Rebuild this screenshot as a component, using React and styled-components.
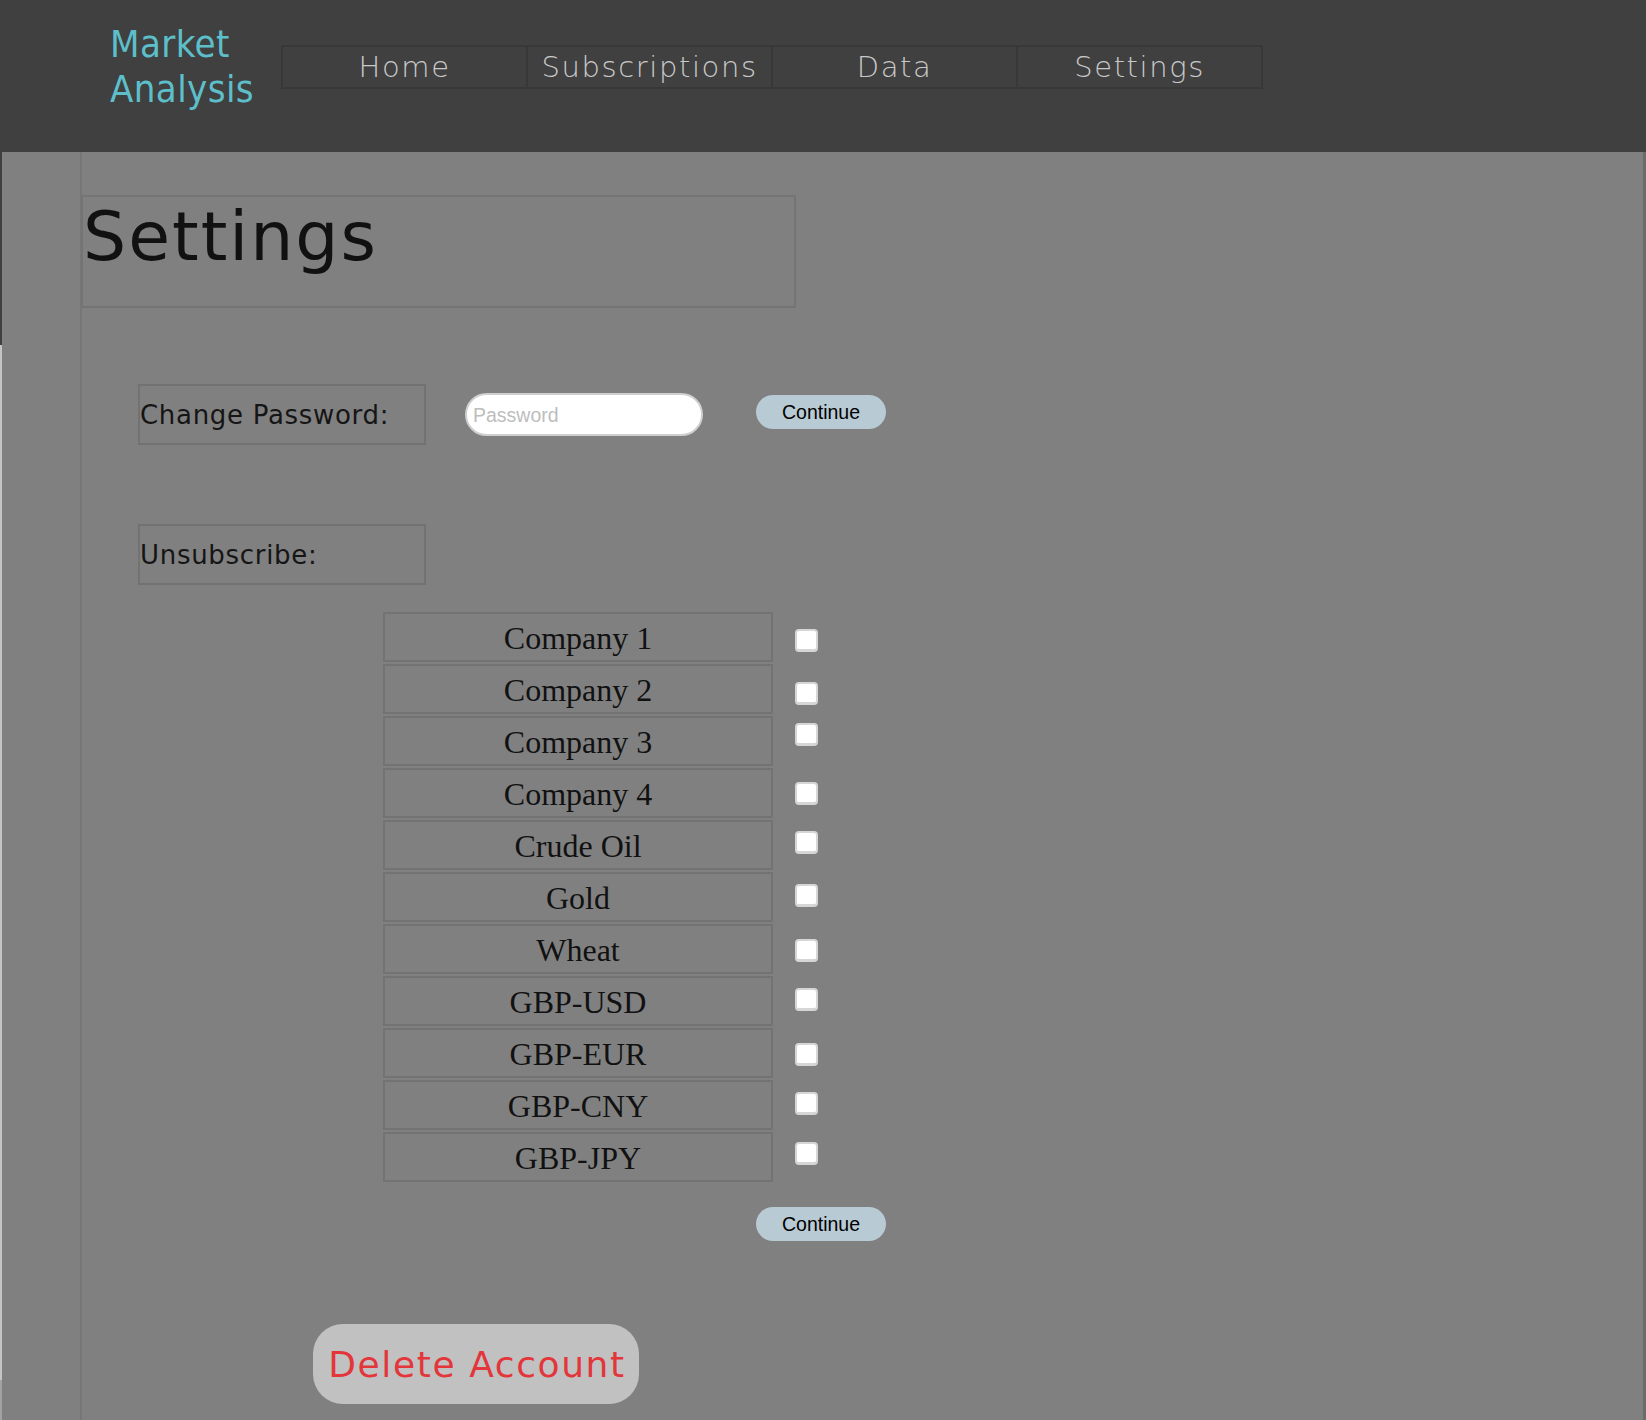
import React from "react";
import styled, { createGlobalStyle } from "styled-components";

const GlobalStyle = createGlobalStyle`
  html, body {
    margin: 0;
    padding: 0;
    background: #c4c4c4;
  }
  #root {
    min-height: 100vh;
  }
`;

const Page = styled.div`
  display: flex;
  flex-direction: column;
  min-height: 100vh;
`;

const Header = styled.header`
  display: flex;
  align-items: flex-start;
  height: 152px;
  padding-left: 110px;
  background: #404040;
  box-sizing: border-box;
`;

const Logo = styled.div`
  margin-top: 22px;
  font-family: "DejaVu Sans Condensed", "DejaVu Sans", sans-serif;
  font-stretch: condensed;
  font-size: 38px;
  line-height: 45px;
  letter-spacing: 0.4px;
  color: #5dbfca;
`;

const Nav = styled.nav`
  display: flex;
  margin-top: 45px;
  margin-left: 27px;
  border: 2px solid #383838;
`;

const NavItem = styled.a`
  display: flex;
  align-items: center;
  justify-content: center;
  width: 243px;
  height: 40px;
  border-left: ${(p) => (p.$first ? "none" : "2px solid #383838")};
  font-family: "DejaVu Sans", sans-serif;
  font-weight: 300;
  font-size: 29px;
  letter-spacing: 1.6px;
  color: #c9c9c9;
  text-decoration: none;
  cursor: pointer;
`;

const Main = styled.main`
  flex: 1;
  display: flex;
  padding-left: 2px;
  background:
    linear-gradient(to bottom, #404040 193px, #c4c4c4 193px, #c4c4c4 1228px, #a2a2a2 1228px) left top / 2px 100% no-repeat,
    #808080;
  border-right: 3px solid #6c6c6c;
`;

const Content = styled.section`
  display: flex;
  flex-direction: column;
  align-items: flex-start;
  margin-left: 78px;
  padding-bottom: 15px;
  border-left: 2px solid #767676;
`;

const TitleBox = styled.div`
  margin-top: 43px;
  margin-left: -1px;
  width: 715px;
  height: 113px;
  box-sizing: border-box;
  border: 2px solid #747474;
`;

const Title = styled.h1`
  margin: 0;
  font-family: "DejaVu Sans", sans-serif;
  font-weight: 400;
  font-size: 68px;
  line-height: normal;
  letter-spacing: 2px;
  color: #111;
`;

const FormRow = styled.div`
  display: flex;
  align-items: center;
  margin-top: 76px;
  margin-left: 56px;
`;

const Label = styled.div`
  display: flex;
  align-items: center;
  width: 288px;
  height: 61px;
  box-sizing: border-box;
  margin-top: ${(p) => p.$top || 0}px;
  margin-left: ${(p) => p.$left || 0}px;
  border: 2px solid #727272;
  font-family: "DejaVu Sans", sans-serif;
  font-size: 26px;
  letter-spacing: 0.7px;
  color: #151515;
`;

const PasswordInput = styled.input`
  width: 238px;
  height: 43px;
  box-sizing: border-box;
  margin-left: 39px;
  padding: 2px 6px 0;
  border: 2px solid #cfcfcf;
  border-radius: 22px;
  background: #fff;
  outline: none;
  font-family: "Liberation Sans", Arial, sans-serif;
  font-size: 19.5px;

  &::placeholder {
    color: #bdbdbd;
  }
`;

const PillButton = styled.button`
  width: 130px;
  height: 34px;
  margin-top: ${(p) => p.$top || 0}px;
  margin-left: ${(p) => p.$left || 0}px;
  margin-bottom: ${(p) => p.$lift || 0}px;
  padding: 0;
  border: none;
  border-radius: 17px;
  background: #b8cad3;
  font-family: "Liberation Sans", Arial, sans-serif;
  font-size: 19.5px;
  color: #000;
  cursor: pointer;
`;

const SubList = styled.div`
  display: flex;
  margin-top: 27px;
  margin-left: 301px;
`;

const Names = styled.div`
  display: flex;
  flex-direction: column;
  gap: 2px;
`;

const NameRow = styled.div`
  display: flex;
  align-items: center;
  justify-content: center;
  width: 390px;
  height: 50px;
  box-sizing: border-box;
  padding-top: 3px;
  border: 2px solid #737373;
  font-family: "Liberation Serif", "Times New Roman", serif;
  font-size: 32px;
  color: #111;
`;

const Checks = styled.div`
  display: flex;
  flex-direction: column;
  gap: 2px;
  margin-left: 22px;
`;

const CheckSlot = styled.div`
  height: 50px;
  box-sizing: border-box;
  padding-top: ${(p) => 14 + p.$shift}px;
`;

const Check = styled.input`
  appearance: none;
  display: block;
  margin: 0;
  width: 23px;
  height: 23px;
  box-sizing: border-box;
  border: 2px solid #d6d6d6;
  border-bottom-width: 3px;
  border-radius: 4px;
  background: #fff;
  cursor: pointer;

  &:checked {
    background: #5dbfca;
  }
`;

const DeleteButton = styled.button`
  width: 326px;
  height: 80px;
  margin-top: 83px;
  margin-left: 231px;
  padding: 0 0 0 2px;
  border: none;
  border-radius: 30px;
  background: #c1c1c1;
  font-family: "DejaVu Sans", sans-serif;
  font-size: 36px;
  letter-spacing: 1.6px;
  color: #e2363b;
  cursor: pointer;
`;

const navLinks = ["Home", "Subscriptions", "Data", "Settings"];

const subscriptions = [
  { name: "Company 1", shift: 3 },
  { name: "Company 2", shift: 4 },
  { name: "Company 3", shift: -7 },
  { name: "Company 4", shift: 0 },
  { name: "Crude Oil", shift: -3 },
  { name: "Gold", shift: -2 },
  { name: "Wheat", shift: 1 },
  { name: "GBP-USD", shift: -2 },
  { name: "GBP-EUR", shift: 1 },
  { name: "GBP-CNY", shift: -2 },
  { name: "GBP-JPY", shift: -4 },
];

export default function App() {
  return (
    <>
      <GlobalStyle />
      <Page>
        <Header>
          <Logo>
            Market
            <br />
            Analysis
          </Logo>
          <Nav>
            {navLinks.map((link, i) => (
              <NavItem key={link} $first={i === 0}>
                {link}
              </NavItem>
            ))}
          </Nav>
        </Header>
        <Main>
          <Content>
            <TitleBox>
              <Title>Settings</Title>
            </TitleBox>

            <FormRow>
              <Label>Change Password:</Label>
              <PasswordInput type="password" placeholder="Password" />
              <PillButton $left={53} $lift={5}>
                Continue
              </PillButton>
            </FormRow>

            <Label $top={79} $left={56}>
              Unsubscribe:
            </Label>

            <SubList>
              <Names>
                {subscriptions.map((s) => (
                  <NameRow key={s.name}>{s.name}</NameRow>
                ))}
              </Names>
              <Checks>
                {subscriptions.map((s) => (
                  <CheckSlot key={s.name} $shift={s.shift}>
                    <Check type="checkbox" aria-label={s.name} />
                  </CheckSlot>
                ))}
              </Checks>
            </SubList>

            <PillButton $top={25} $left={674}>
              Continue
            </PillButton>

            <DeleteButton>Delete Account</DeleteButton>
          </Content>
        </Main>
      </Page>
    </>
  );
}
